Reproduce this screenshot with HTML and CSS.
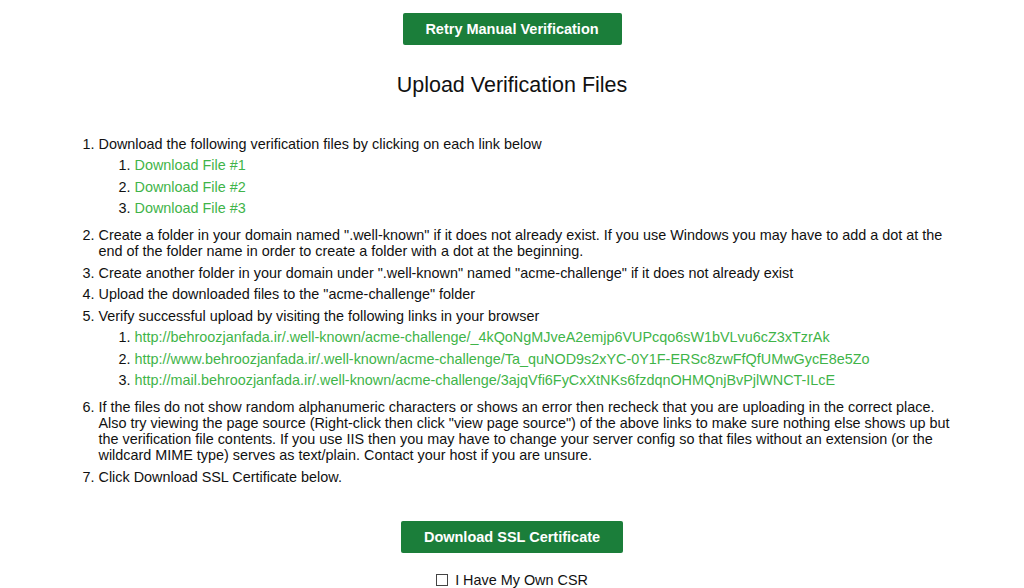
FILE: index.html
```html
<!DOCTYPE html>
<html>
<head>
<meta charset="utf-8">
<link rel="stylesheet" href="styles.css">
</head>
<body>
<div class="page">
  <div class="center top"><button class="btn">Retry Manual Verification</button></div>
  <h2 class="title">Upload Verification Files</h2>
  <ol class="steps">
    <li>Download the following verification files by clicking on each link below
      <ol class="sub">
        <li><a href="#">Download File #1</a></li>
        <li><a href="#">Download File #2</a></li>
        <li><a href="#">Download File #3</a></li>
      </ol>
    </li>
    <li>Create a folder in your domain named ".well-known" if it does not already exist. If you use Windows you may have to add a dot at the end of the folder name in order to create a folder with a dot at the beginning.</li>
    <li>Create another folder in your domain under ".well-known" named "acme-challenge" if it does not already exist</li>
    <li>Upload the downloaded files to the "acme-challenge" folder</li>
    <li>Verify successful upload by visiting the following links in your browser
      <ol class="sub">
        <li><a href="#">http://behroozjanfada.ir/.well-known/acme-challenge/_4kQoNgMJveA2emjp6VUPcqo6sW1bVLvu6cZ3xTzrAk</a></li>
        <li><a href="#">http://www.behroozjanfada.ir/.well-known/acme-challenge/Ta_quNOD9s2xYC-0Y1F-ERSc8zwFfQfUMwGycE8e5Zo</a></li>
        <li><a href="#">http://mail.behroozjanfada.ir/.well-known/acme-challenge/3ajqVfi6FyCxXtNKs6fzdqnOHMQnjBvPjlWNCT-ILcE</a></li>
      </ol>
    </li>
    <li>If the files do not show random alphanumeric characters or shows an error then recheck that you are uploading in the correct place. Also try viewing the page source (Right-click then click "view page source") of the above links to make sure nothing else shows up but the verification file contents. If you use IIS then you may have to change your server config so that files without an extension (or the wildcard MIME type) serves as text/plain. Contact your host if you are unsure.</li>
    <li>Click Download SSL Certificate below.</li>
  </ol>
  <div class="center bottom"><button class="btn btn-wide">Download SSL Certificate</button></div>
  <div class="center csr"><label class="check"><span class="box"></span>I Have My Own CSR</label></div>
</div>
</body>
</html>
```

FILE: styles.css
```css
html, body {
  margin: 0;
  padding: 0;
  background: #ffffff;
}
body {
  font-family: "Liberation Sans", Arial, sans-serif;
  font-size: 14.4px;
  color: #111111;
}
.page {
  width: 875px;
  margin: 0 auto;
  padding-top: 13px;
}
.center {
  display: flex;
  justify-content: center;
}
.btn {
  font-family: "Liberation Sans", Arial, sans-serif;
  font-weight: bold;
  font-size: 14.5px;
  color: #ffffff;
  background: #1b7e3a;
  border: none;
  border-radius: 2px;
  height: 32px;
  width: 219px;
  padding: 0;
}
.btn-wide {
  width: 222px;
}
.title {
  font-weight: normal;
  font-size: 21.5px;
  text-align: center;
  margin: 28px 0 36px;
  line-height: 24px;
  color: #111;
}
.steps {
  margin: 0;
  padding-left: 24px;
  line-height: 16px;
}
.steps > li {
  padding: 2.75px 0;
}
.sub {
  margin: 2.5px 0 3px;
  padding-left: 36px;
}
.sub li {
  padding: 2.75px 0;
}
a {
  color: #3fb449;
  text-decoration: none;
}
.bottom {
  margin-top: 33px;
}
.csr {
  margin-top: 19px;
}
.check {
  display: flex;
  align-items: center;
  gap: 7px;
  line-height: 16px;
}
.box {
  width: 10px;
  height: 10px;
  border: 1px solid #444;
  display: inline-block;
}
```
